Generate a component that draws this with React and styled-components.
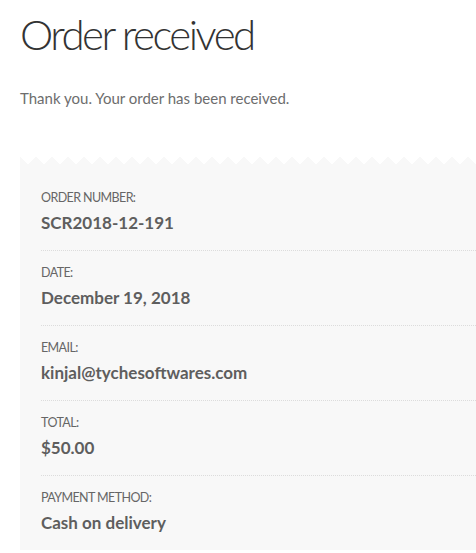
import React from 'react';
import styled, { createGlobalStyle } from 'styled-components';

const GlobalStyle = createGlobalStyle`
  html, body {
    margin: 0;
    padding: 0;
    background: #fff;
  }
  body {
    font-family: Lato, "Liberation Sans", sans-serif;
    color: #6d6d6d;
    overflow: hidden;
  }
`;

const Page = styled.div`
  padding: 0 0 0 20px;
  width: 476px;
  box-sizing: border-box;
  overflow: hidden;
`;

const Title = styled.h1`
  margin: 0;
  padding-top: 8px;
  font-size: 42px;
  font-weight: 300;
  line-height: 52px;
  color: #333;
  letter-spacing: -2.5px;
`;

const Notice = styled.p`
  margin: 25px 0 0;
  font-size: 15px;
  line-height: 26px;
  color: #6d6d6d;
`;

const Panel = styled.div`
  margin-top: 45px;
  width: 480px;
`;

const Zigzag = styled.div`
  height: 8px;
  background: conic-gradient(from -45deg at 50% 100%, transparent 90deg, #f8f8f8 0) 0 0 / 16px 8px repeat-x;
`;

const List = styled.ul`
  list-style: none;
  margin: 0;
  padding: 0 0 0 21px;
  background: #f8f8f8;
`;

const Item = styled.li`
  padding: 12px 0 15px;
  border-top: 1px dotted #dcdcdc;

  &:first-child {
    padding-top: 24px;
    border-top: 0;
  }
`;

const Label = styled.div`
  font-size: 12.5px;
  line-height: 20px;
  letter-spacing: -0.6px;
  text-transform: uppercase;
  color: #666;
`;

const Value = styled.strong`
  display: block;
  margin-top: 3px;
  font-size: 17px;
  line-height: 24px;
  font-weight: 700;
  color: #5e5e5e;
`;

const details = [
  { label: 'Order number:', value: 'SCR2018-12-191' },
  { label: 'Date:', value: 'December 19, 2018' },
  { label: 'Email:', value: 'kinjal@tychesoftwares.com' },
  { label: 'Total:', value: '$50.00' },
  { label: 'Payment method:', value: 'Cash on delivery' },
];

const App = () => (
  <Page>
    <GlobalStyle />
    <Title>Order received</Title>
    <Notice>Thank you. Your order has been received.</Notice>
    <Panel>
      <Zigzag />
      <List>
        {details.map(({ label, value }) => (
          <Item key={label}>
            <Label>{label}</Label>
            <Value>{value}</Value>
          </Item>
        ))}
      </List>
    </Panel>
  </Page>
);

export default App;
